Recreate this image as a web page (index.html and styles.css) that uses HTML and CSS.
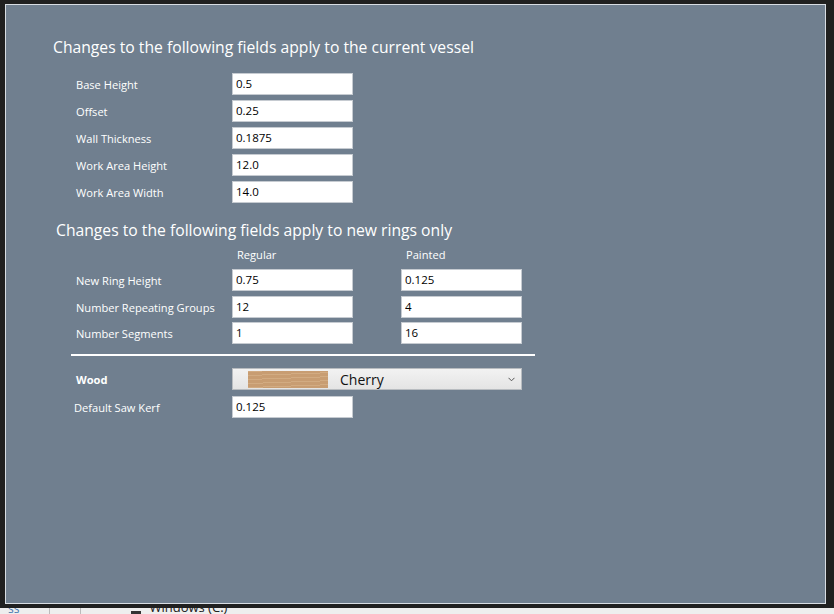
FILE: index.html
```html
<!DOCTYPE html>
<html lang="en">
<head>
  <meta charset="UTF-8">
  <meta name="viewport" content="width=device-width, initial-scale=1.0">
  <title>Vessel Settings</title>
  <link rel="stylesheet" href="styles.css">
</head>
<body>
  <div class="window">
    <div class="panel">
      <h2 class="title">Changes to the following fields apply to the current vessel</h2>
      <div class="form">
        <label class="label">Base Height</label>
        <input class="field" type="text" value="0.5">
        <label class="label">Offset</label>
        <input class="field" type="text" value="0.25">
        <label class="label">Wall Thickness</label>
        <input class="field" type="text" value="0.1875">
        <label class="label">Work Area Height</label>
        <input class="field" type="text" value="12.0">
        <label class="label">Work Area Width</label>
        <input class="field" type="text" value="14.0">
      </div>

      <h2 class="title title-rings">Changes to the following fields apply to new rings only</h2>
      <div class="heads">
        <span></span>
        <span class="head">Regular</span>
        <span></span>
        <span class="head">Painted</span>
      </div>
      <div class="form rings">
        <label class="label">New Ring Height</label>
        <input class="field" type="text" value="0.75">
        <span></span>
        <input class="field" type="text" value="0.125">
        <label class="label">Number Repeating Groups</label>
        <input class="field" type="text" value="12">
        <span></span>
        <input class="field" type="text" value="4">
        <label class="label">Number Segments</label>
        <input class="field" type="text" value="1">
        <span></span>
        <input class="field" type="text" value="16">
      </div>

      <hr class="divider">

      <div class="form wood">
        <label class="label bold">Wood</label>
        <div class="combo">
          <span class="swatch"></span>
          <span class="combo-text">Cherry</span>
          <svg class="chevron" width="7" height="5" viewBox="0 0 7 5"><path d="M0.5 0.8 L3.5 3.8 L6.5 0.8" fill="none" stroke="#555" stroke-width="1"/></svg>
        </div>
        <label class="label kerf">Default Saw Kerf</label>
        <input class="field" type="text" value="0.125">
      </div>
    </div>
  </div>
  <div class="taskbar">
    <span class="tb-a">ss</span>
    <span class="tb-sep"></span>
    <span class="tb-sep"></span>
    <span class="tb-icon"></span>
    <span class="tb-text">Windows (C:)</span>
  </div>
</body>
</html>
```

FILE: styles.css
```css
body {
  margin: 0;
  background-color: #202020;
  font-family: "Open Sans", "Noto Sans", sans-serif;
  height: 614px;
  overflow: hidden;
}

.window {
  margin: 4px 8px 0 5px;
  height: 600px;
  box-sizing: border-box;
  border: 1px solid #d8dde3;
  background-color: #707f8f;
}

.panel {
  padding-top: 32px;
}

.title {
  margin: 0 0 16px 47px;
  font-size: 15.7px;
  line-height: 20px;
  font-weight: 400;
  color: #ffffff;
}

.title-rings {
  margin: 17px 0 7px 50px;
}

.form {
  display: grid;
  grid-template-columns: 156px 121px;
  grid-auto-rows: 22px;
  row-gap: 5px;
  padding-left: 70px;
}

.rings,
.heads {
  grid-template-columns: 156px 121px 48px 121px;
}

.rings {
  row-gap: 4.5px;
}

.heads {
  display: grid;
  padding-left: 70px;
  height: 16px;
  margin-bottom: 6px;
}

.head {
  padding-left: 5px;
  font-size: 11.1px;
  line-height: 16px;
  color: #ffffff;
}

.label {
  font-size: 11.1px;
  line-height: 22px;
  padding-top: 1px;
  color: #ffffff;
  white-space: nowrap;
}

.bold {
  font-weight: 700;
}

.kerf {
  margin-left: -2px;
}

.field {
  box-sizing: border-box;
  width: 121px;
  height: 22px;
  margin: 0;
  padding: 0 3px 1px;
  border: 1px solid #c6cbd1;
  background: #ffffff;
  font-family: "Open Sans", "Noto Sans", sans-serif;
  font-size: 11.5px;
  color: #000000;
  outline: none;
}

.divider {
  margin: 10px 0 12px 65px;
  width: 464px;
  height: 2px;
  border: none;
  background-color: #ffffff;
}

.wood {
  row-gap: 6px;
}

.combo {
  width: 290px;
  box-sizing: border-box;
  height: 22px;
  border: 1px solid #b8bcc0;
  background: linear-gradient(#f2f2f2, #e4e4e4);
  display: flex;
  align-items: center;
  position: relative;
}

.swatch {
  width: 80px;
  height: 17px;
  margin-left: 15px;
  background-color: #c89d72;
  background-image: repeating-linear-gradient(178deg, rgba(255,235,200,0.18) 0 1px, rgba(0,0,0,0) 1px 4px);
}

.combo-text {
  margin-left: 12px;
  font-size: 14px;
  line-height: 20px;
  padding-top: 2px;
  color: #111111;
}

.chevron {
  position: absolute;
  right: 6px;
  top: 8px;
}

.taskbar {
  margin-top: 4px;
  height: 10px;
  background-color: #eeeeee;
  display: flex;
  align-items: flex-start;
  overflow: hidden;
  font-size: 12px;
  color: #222;
}

.tb-a {
  margin: -8px 0 0 8px;
  color: #4a7ab0;
}

.tb-sep {
  width: 1px;
  height: 10px;
  background: #bbb;
  margin-left: 30px;
}

.tb-icon {
  width: 10px;
  height: 4px;
  margin: 3px 0 0 50px;
  background: #333;
}

.tb-text {
  margin: -10px 0 0 8px;
  font-size: 13px;
}
```
